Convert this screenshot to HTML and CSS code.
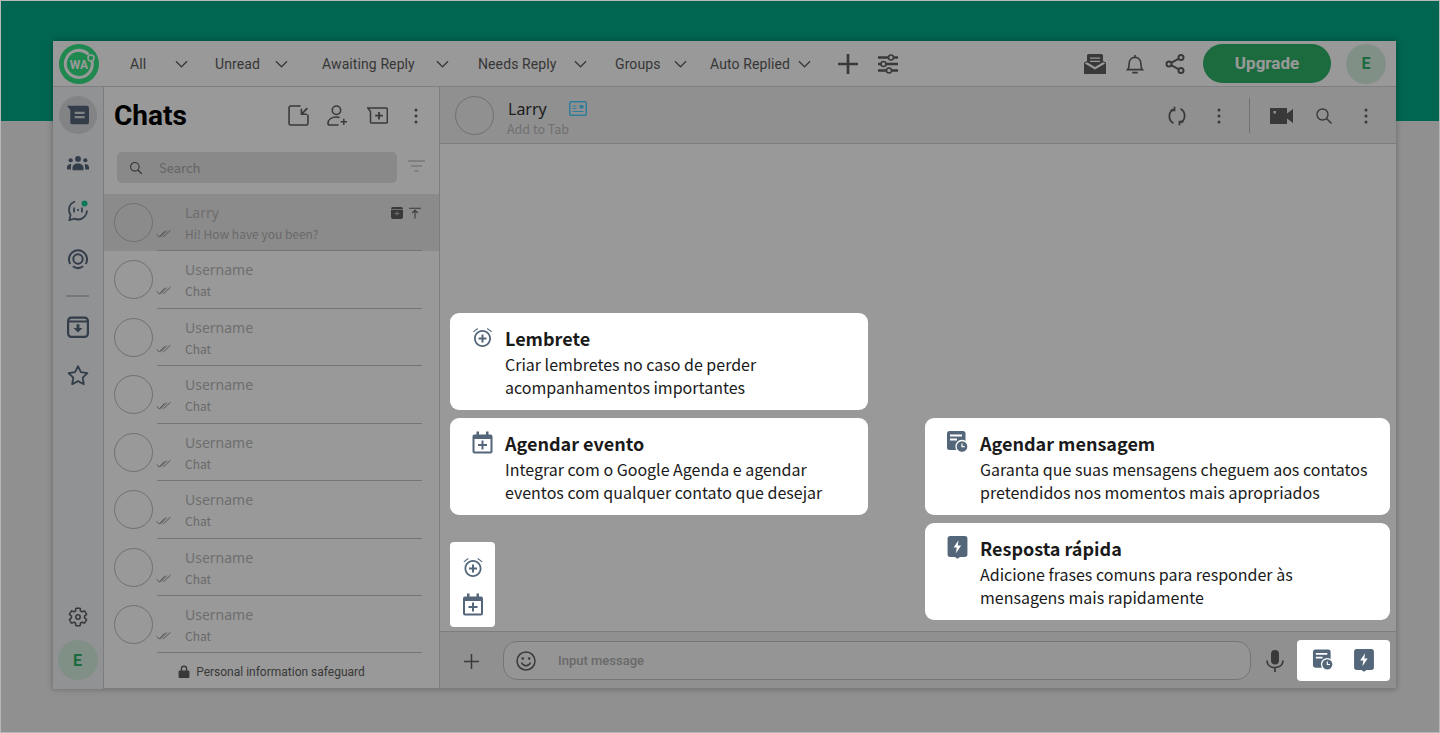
FILE: index.html
```html
<!DOCTYPE html>
<html lang="en">
<head>
    <meta charset="utf-8" />
    <meta name="viewport" content="width=device-width, initial-scale=1.0">
    <link rel="stylesheet" href="styles.css">
    <title>WA Chats</title>
</head>
<body>

<!-- Shared icons -->
<svg class="sprite">
    <symbol id="i-chev" viewBox="0 0 14 8"><path d="M1 1l6 6 6-6" fill="none" stroke="currentColor" stroke-width="1.3"/></symbol>
    <symbol id="i-check" viewBox="0 0 15 10"><path d="M.7 5.5l2.6 2.4L8.600 2.200M4.500 7.900L11 1.500M7.300 7.900L14.500 1.200" fill="none" stroke="currentColor" stroke-width=".9"/></symbol>
    <symbol id="i-dots" viewBox="0 0 4 16"><circle cx="2" cy="2" r="1.500" fill="currentColor"/><circle cx="2" cy="8" r="1.500" fill="currentColor"/><circle cx="2" cy="14" r="1.500" fill="currentColor"/></symbol>
    <symbol id="i-search" viewBox="0 0 18 18"><circle cx="7.500" cy="7.500" r="5.500" fill="none" stroke="currentColor" stroke-width="1.400"/><path d="M11.500 11.500l5 5" stroke="currentColor" stroke-width="1.600"/></symbol>
    <symbol id="i-alarm" viewBox="1 .5 22 23"><path fill="currentColor" d="M7.600 3.400L7 2.500 2.500 5.900l.6.900zM21.500 5.900L17 2.500l-.6.900 4.500 3.400zM12 4.500c-4.700 0-8.500 3.800-8.500 8.500s3.800 8.500 8.500 8.500 8.500-3.800 8.500-8.500-3.800-8.500-8.500-8.500zm0 15.200c-3.700 0-6.700-3-6.700-6.700s3-6.700 6.700-6.700 6.700 3 6.700 6.700-3 6.700-6.700 6.700zm1-10.700h-2v3H8v2h3v3h2v-3h3v-2h-3z"/></symbol>
    <symbol id="i-calendar" viewBox="-1 -.5 22 23"><path fill="currentColor" d="M4 0h2.500v3h7V0H16v3h2a2 2 0 012 2v15a2 2 0 01-2 2H2a2 2 0 01-2-2V5a2 2 0 012-2h2zM2 7.500V20h16V7.500zM9 9h2v3.500h3.500v2H11V18H9v-3.500H5.500v-2H9z"/></symbol>
    <symbol id="i-schedule" viewBox="-1 0 23 23"><rect width="18.500" height="19" rx="2.500" fill="currentColor"/><path d="M3 4.500h12M3 8.500h7" stroke="#fff" stroke-width="1.800"/><circle cx="15" cy="15.500" r="6" fill="currentColor" stroke="#fff" stroke-width="1.300"/><path d="M15 12.500v3.200h2.800" fill="none" stroke="#fff" stroke-width="1.200"/></symbol>
    <symbol id="i-quick" viewBox="0 0 19 22"><path fill="currentColor" d="M2.500 0h14A2.500 2.500 0 0119 2.500v15a2.500 2.500 0 01-2.500 2.500H12l-2.500 1.800L7 20H2.500A2.500 2.500 0 010 17.500v-15A2.500 2.500 0 012.500 0z"/><path fill="#fff" d="M10.500 4L5.800 11h3l-.8 5.500L13 9.200h-3.200z"/></symbol>
</svg>

<div class="app">
    <header class="topbar">
        <svg class="logo" viewBox="0 0 40 40">
            <circle cx="20" cy="20" r="20" fill="#32e382"/>
            <path d="M29.500 10.500A13.500 13.500 0 1 0 33 17" fill="none" stroke="#fff" stroke-width="3"/>
            <circle cx="32" cy="14" r="3" fill="#32e382" stroke="#fff" stroke-width="1.500"/>
            <text x="20" y="24.500" text-anchor="middle" class="logo-text">WA</text>
        </svg>
        <nav class="tabs">
            <div class="tab">All <svg class="chev"><use href="#i-chev"/></svg></div>
            <div class="tab">Unread <svg class="chev"><use href="#i-chev"/></svg></div>
            <div class="tab">Awaiting Reply <svg class="chev"><use href="#i-chev"/></svg></div>
            <div class="tab">Needs Reply <svg class="chev"><use href="#i-chev"/></svg></div>
            <div class="tab">Groups <svg class="chev"><use href="#i-chev"/></svg></div>
            <div class="tab">Auto Replied <svg class="chev"><use href="#i-chev"/></svg></div>
        </nav>
        <svg class="bar-plus" viewBox="0 0 20 20"><path d="M10 0v20M0 10h20" stroke="currentColor" stroke-width="2.600"/></svg>
        <svg class="bar-sliders" viewBox="0 0 20 20" fill="none" stroke="currentColor" stroke-width="2.400">
            <path d="M0 3.500h20M0 10h20M0 16.500h20"/>
            <circle cx="13" cy="3.500" r="2.500" fill="#fff" stroke-width="1.500"/>
            <circle cx="5.500" cy="10" r="2.500" fill="#fff" stroke-width="1.500"/>
            <circle cx="11" cy="16.500" r="2.500" fill="#fff" stroke-width="1.500"/>
        </svg>
        <div class="bar-right">
            <svg class="bar-icon" viewBox="0 0 22 20"><path fill="currentColor" d="M3 7V1.500A1.500 1.500 0 014.500 0h13A1.500 1.500 0 0119 1.500V7l3 1.800V20H0V8.800zM6 3.500v1.300h10V3.500zm0 3.200V8h10V6.700zM.8 9.500L11 15.500l10.200-6-2.200-1.300-8 4.700-8-4.700z"/></svg>
            <svg class="bar-icon" viewBox="0 0 20 22" fill="none" stroke="currentColor" stroke-width="1.800"><path d="M2 17.200c1.400-1.500 1.500-3 1.500-6.200C3.500 7 6 3.700 10 3.700S16.500 7 16.500 11c0 3.200.1 4.700 1.500 6.200zM10 1v2.500"/><path d="M7 20.500h6" stroke-width="2"/></svg>
            <svg class="bar-icon" viewBox="0 0 20 20" fill="none" stroke="currentColor" stroke-width="2"><circle cx="16" cy="3.500" r="2.500"/><circle cx="4" cy="10" r="2.500"/><circle cx="16" cy="16.500" r="2.500"/><path d="M6.200 8.800l7.600-4.200M6.200 11.200l7.600 4.200"/></svg>
            <button class="upgrade">Upgrade</button>
            <div class="user-badge">E</div>
        </div>
    </header>

    <div class="app-body">
        <aside class="rail">
            <div class="rail-item rail-active">
                <svg viewBox="0 0 20 17"><path fill="currentColor" d="M0 0h18a2 2 0 012 2v13a2 2 0 01-2 2H5a2 2 0 01-2-2V4z"/><path d="M7 6.500h9M7 10.500h9" stroke="#d8dade" stroke-width="2"/></svg>
            </div>
            <div class="rail-item">
                <svg viewBox="0 0 24 16"><g fill="currentColor"><circle cx="12" cy="3.500" r="3.200"/><circle cx="4" cy="5" r="2.300"/><circle cx="20" cy="5" r="2.300"/><path d="M6 16v-3c0-2.500 2.500-4.500 6-4.500s6 2 6 4.500v3zM0 15v-2.500C0 10.500 1.500 9 4.500 9L4.200 15zM24 15v-2.500c0-2-1.500-3.500-4.500-3.500l.3 6z"/></g></svg>
            </div>
            <div class="rail-item">
                <svg viewBox="0 0 22 22"><path d="M8 1.500A9 9 0 0 0 2 10c0 2 .6 3.400 1.500 4.800L2.500 20l5-1.300c1.200.5 2.300.8 3.500.8a9 9 0 0 0 9-9" fill="none" stroke="currentColor" stroke-width="1.800"/><path d="M7.500 7.500a5 5 0 0 0 0 5M14.500 7.500a5 5 0 0 1 0 5" fill="none" stroke="currentColor" stroke-width="1.600"/><circle cx="11" cy="10" r="1.100" fill="currentColor"/><circle cx="17.500" cy="3.500" r="3" fill="#17c79a"/></svg>
            </div>
            <div class="rail-item">
                <svg viewBox="0 0 22 22" fill="none" stroke="currentColor" stroke-width="2"><circle cx="11" cy="11" r="4.700"/><path d="M3.300 16a9 9 0 1 1 15.400 0"/><path d="M5.800 18.300a9 9 0 0 0 10.400 0"/></svg>
            </div>
            <div class="rail-divider"></div>
            <div class="rail-item">
                <svg viewBox="0 0 20 20"><path fill="none" stroke="currentColor" stroke-width="2" d="M1 4.500A3 3 0 014 1.500h12a3 3 0 013 3V16a3 3 0 01-3 3H4a3 3 0 01-3-3zM1 5h18"/><path fill="currentColor" d="M8.700 7.500h2.600v3.300H14L10 15l-4-4.200h2.700z"/></svg>
            </div>
            <div class="rail-item">
                <svg viewBox="0 0 22 21"><path fill="none" stroke="currentColor" stroke-width="1.800" stroke-linejoin="round" d="M11 1.700l2.900 6 6.500.9-4.700 4.600 1.100 6.500-5.800-3.100-5.800 3.100 1.100-6.500L1.600 8.600l6.500-.9z"/></svg>
            </div>
            <div class="rail-item rail-bottom">
                <svg viewBox="0 0 24 24"><path fill="none" stroke="#606060" stroke-width="1.700" d="M19.140 12.940c.04-.3.060-.61.060-.94 0-.32-.020-.64-.070-.94l2.030-1.580c.18-.14.230-.41.120-.61l-1.920-3.320c-.12-.22-.37-.29-.59-.22l-2.390.96c-.5-.38-1.030-.7-1.620-.94l-.36-2.540c-.04-.24-.24-.41-.48-.41h-3.840c-.24 0-.43.17-.47.41l-.36 2.540c-.59.24-1.130.57-1.620.94l-2.390-.96c-.22-.08-.47 0-.59.22L2.740 8.870c-.12.21-.08.47.12.61l2.030 1.580c-.05.3-.09.63-.09.94s.02.64.07.94l-2.030 1.580c-.18.14-.23.41-.12.61l1.920 3.320c.12.22.37.29.59.22l2.390-.96c.5.38 1.030.7 1.620.94l.36 2.540c.05.24.24.41.48.41h3.840c.24 0 .44-.17.47-.41l.36-2.540c.59-.24 1.130-.56 1.620-.94l2.390.96c.22.08.47 0 .59-.22l1.920-3.320c.12-.22.07-.47-.12-.61z"/><circle cx="12" cy="12" r="2.400" fill="none" stroke="#606060" stroke-width="1.700"/></svg>
            </div>
            <div class="user-badge rail-badge">E</div>
        </aside>

        <section class="chat-list">
            <div class="list-head">
                <h1>Chats</h1>
                <svg class="head-icon" viewBox="0 0 20 20" fill="none" stroke="currentColor" stroke-width="1.500"><path d="M12 1H2.500A1.500 1.500 0 001 2.500v15A1.500 1.500 0 002.500 19h15a1.500 1.500 0 001.500-1.500V9"/><path fill="currentColor" stroke="none" d="M12 3.500v6h6V8H14.700L19 3.500 17.800 2.300 13.500 6.800V3.500z"/></svg>
                <svg class="head-icon" viewBox="0 0 20 20" fill="none" stroke="currentColor" stroke-width="1.500"><circle cx="9" cy="5" r="4"/><path d="M1 19v-1.500C1 14 4 11.500 9 11.500c1 0 2 .1 3 .4M1 19h10"/><path d="M16 13v6M13 16h6" stroke-width="1.400"/></svg>
                <svg class="head-icon" viewBox="0 0 21 17" fill="none" stroke="currentColor" stroke-width="1.500"><path d="M.8 1h18.700a.8.8 0 01.8.8V15a1 1 0 01-1 1H4.500a1 1 0 01-1-1V4.500z"/><path d="M12 5v7.500M8.200 8.700h7.600" stroke-width="1.800"/></svg>
                <svg class="head-dots"><use href="#i-dots"/></svg>
            </div>
            <div class="search-row">
                <div class="search-box">
                    <svg class="search-icon"><use href="#i-search"/></svg>
                    <span>Search</span>
                </div>
                <svg class="filter-icon" viewBox="0 0 17 12"><path d="M0 1h17M3 6h11M6.500 11h4" stroke="currentColor" stroke-width="1.300"/></svg>
            </div>

            <div class="row row-active">
                <div class="avatar"></div>
                <div class="row-main">
                    <svg class="check"><use href="#i-check"/></svg>
                    <div class="row-text">
                        <div class="row-name">Larry
                            <span class="row-flags">
                                <svg viewBox="0 0 12 12"><path fill="#606060" d="M2 0h8a2 2 0 012 2v8a2 2 0 01-2 2H2a2 2 0 01-2-2V2a2 2 0 012-2z"/><path d="M0 2.500h12M3.500 6.500h5M6 4.500v4" stroke="#bbb" stroke-width="1"/></svg>
                                <svg viewBox="0 0 13 12"><path d="M0 .8h13M6.500 12V3.500M3.500 6l3-3 3 3" fill="none" stroke="#606060" stroke-width="1.200"/></svg>
                            </span>
                        </div>
                        <div class="row-msg">Hi! How have you been?</div>
                    </div>
                </div>
            </div>
            <div class="row">
                <div class="avatar"></div>
                <div class="row-main"><svg class="check"><use href="#i-check"/></svg>
                    <div class="row-text"><div class="row-name">Username</div><div class="row-msg">Chat</div></div></div>
            </div>
            <div class="row">
                <div class="avatar"></div>
                <div class="row-main"><svg class="check"><use href="#i-check"/></svg>
                    <div class="row-text"><div class="row-name">Username</div><div class="row-msg">Chat</div></div></div>
            </div>
            <div class="row">
                <div class="avatar"></div>
                <div class="row-main"><svg class="check"><use href="#i-check"/></svg>
                    <div class="row-text"><div class="row-name">Username</div><div class="row-msg">Chat</div></div></div>
            </div>
            <div class="row">
                <div class="avatar"></div>
                <div class="row-main"><svg class="check"><use href="#i-check"/></svg>
                    <div class="row-text"><div class="row-name">Username</div><div class="row-msg">Chat</div></div></div>
            </div>
            <div class="row">
                <div class="avatar"></div>
                <div class="row-main"><svg class="check"><use href="#i-check"/></svg>
                    <div class="row-text"><div class="row-name">Username</div><div class="row-msg">Chat</div></div></div>
            </div>
            <div class="row">
                <div class="avatar"></div>
                <div class="row-main"><svg class="check"><use href="#i-check"/></svg>
                    <div class="row-text"><div class="row-name">Username</div><div class="row-msg">Chat</div></div></div>
            </div>
            <div class="row">
                <div class="avatar"></div>
                <div class="row-main"><svg class="check"><use href="#i-check"/></svg>
                    <div class="row-text"><div class="row-name">Username</div><div class="row-msg">Chat</div></div></div>
            </div>
            <div class="safeguard">
                <svg viewBox="0 0 11 12"><path fill="#606060" d="M2.500 5V3.500a3 3 0 016 0V5h1a1 1 0 011 1v5a1 1 0 01-1 1h-8a1 1 0 01-1-1V6a1 1 0 011-1zm1.300 0h3.400V3.500a1.700 1.700 0 00-3.400 0z"/></svg>
                Personal information safeguard
            </div>
        </section>

        <section class="conversation">
            <div class="conv-head">
                <div class="avatar conv-avatar"></div>
                <div class="conv-title">
                    <div class="conv-name">Larry
                        <svg viewBox="0 0 18 15" fill="none" stroke="#4bd0ff"><rect x=".75" y=".75" width="16.500" height="13.500" rx="1" stroke-width="1.500"/><path d="M3.500 5h4M3.500 7.500h4M3.500 10.500h11" stroke-width="1.200"/><rect x="10.500" y="4" width="4" height="3.500" fill="#4bd0ff" stroke="none"/></svg>
                    </div>
                    <div class="conv-tab">Add to Tab</div>
                </div>
                <div class="conv-tools">
                    <svg class="tool-sync" viewBox="0 0 20 20" fill="none" stroke="currentColor" stroke-width="1.800"><path d="M6.500 3.300A8 8 0 0 0 6.500 17.300M13.500 16.700A8 8 0 0 0 13.500 2.700"/><path d="M7.500 .8v3.500H3.500M12.500 19.200v-3.500h4"/></svg>
                    <svg class="tool-dots"><use href="#i-dots"/></svg>
                    <span class="tool-line"></span>
                    <svg class="tool-video" viewBox="0 0 23 16"><path fill="currentColor" d="M0 0h17v5.500L23 1v14l-6-4.500V16H0zM3.500 3v2.500H6V3z" fill-rule="evenodd"/></svg>
                    <svg class="tool-search"><use href="#i-search"/></svg>
                    <svg class="tool-dots"><use href="#i-dots"/></svg>
                </div>
            </div>
            <div class="conv-body"></div>
            <div class="composer">
                <svg class="composer-plus" viewBox="0 0 15 15"><path d="M7.500 0v15M0 7.500h15" stroke="currentColor" stroke-width="1.500"/></svg>
                <div class="composer-input">
                    <svg viewBox="0 0 20 20" fill="none" stroke="currentColor" stroke-width="1.500"><circle cx="10" cy="10" r="9"/><path d="M5.500 11.500c1 2.200 2.500 3.300 4.500 3.300s3.500-1.100 4.500-3.300"/><circle cx="6.800" cy="7.500" r="1.300" fill="currentColor" stroke="none"/><circle cx="13.200" cy="7.500" r="1.300" fill="currentColor" stroke="none"/></svg>
                    <span>Input message</span>
                </div>
                <svg class="composer-mic" viewBox="0 0 18 22"><rect x="5" width="8" height="14.500" rx="4" fill="currentColor"/><path d="M1 10.500c0 4.500 3.500 7 8 7s8-2.500 8-7M9 17.500V22" fill="none" stroke="currentColor" stroke-width="1.700"/></svg>
            </div>
        </section>
    </div>
</div>

<!-- Dimmed tour layer with the highlighted features on top -->
<div class="tour">
    <div class="tips tips-left">
        <div class="tip">
            <svg class="tip-icon"><use href="#i-alarm"/></svg>
            <div>
                <h2>Lembrete</h2>
                <p>Criar lembretes no caso de perder<br>acompanhamentos importantes</p>
            </div>
        </div>
        <div class="tip">
            <svg class="tip-icon"><use href="#i-calendar"/></svg>
            <div>
                <h2>Agendar evento</h2>
                <p>Integrar com o Google Agenda e agendar<br>eventos com qualquer contato que desejar</p>
            </div>
        </div>
    </div>
    <div class="tips tips-right">
        <div class="tip">
            <svg class="tip-icon"><use href="#i-schedule"/></svg>
            <div>
                <h2>Agendar mensagem</h2>
                <p>Garanta que suas mensagens cheguem aos contatos<br>pretendidos nos momentos mais apropriados</p>
            </div>
        </div>
        <div class="tip">
            <svg class="tip-icon"><use href="#i-quick"/></svg>
            <div>
                <h2>Resposta rápida</h2>
                <p>Adicione frases comuns para responder às<br>mensagens mais rapidamente</p>
            </div>
        </div>
    </div>
    <div class="spot spot-left">
        <svg><use href="#i-alarm"/></svg>
        <svg><use href="#i-calendar"/></svg>
    </div>
    <div class="spot spot-right">
        <svg><use href="#i-schedule"/></svg>
        <svg><use href="#i-quick"/></svg>
    </div>
</div>

</body>
</html>
```

FILE: styles.css
```css
* {
    box-sizing: border-box;
}

html, body {
    margin: 0;
    height: 733px;
    overflow: hidden;
}

body {
    position: relative;
    padding: 41px 44px 0 53px;
    background: linear-gradient(#00aa87 121px, #f0f0f0 121px);
    font-family: Roboto, sans-serif;
    color: #606060;
}

.sprite {
    display: none;
}

h1, h2, p {
    margin: 0;
}

/* App frame */
.app {
    display: flex;
    flex-direction: column;
    width: 1343px;
    height: 648px;
    background: #fff;
    box-shadow: 0 0 6px rgba(0, 0, 0, 0.3);
}

.topbar {
    display: flex;
    align-items: center;
    flex: none;
    height: 46px;
    padding-left: 6px;
    border-bottom: 1px solid #d6d6d6;
}

.logo {
    flex: none;
    width: 40px;
    height: 40px;
    margin-right: 31px;
}

.logo-text {
    font: 700 12px Roboto, sans-serif;
    fill: #fff;
}

.tabs {
    display: flex;
    flex: none;
    font-size: 14px;
    letter-spacing: 0.1px;
}

.tab {
    display: flex;
    align-items: center;
    justify-content: space-between;
    color: #5c5c5c;
}

.tab:nth-child(1) { width: 58px; margin-right: 27px; }
.tab:nth-child(2) { width: 73px; margin-right: 34px; }
.tab:nth-child(3) { width: 127px; margin-right: 29px; }
.tab:nth-child(4) { width: 109px; margin-right: 28px; }
.tab:nth-child(5) { width: 72px; margin-right: 23px; }
.tab:nth-child(6) { width: 101px; }

.chev {
    width: 13px;
    height: 8px;
}

.bar-plus {
    width: 20px;
    height: 20px;
    margin-left: 27px;
}

.bar-sliders {
    width: 20px;
    height: 20px;
    margin-left: 20px;
}

.bar-right {
    display: flex;
    align-items: center;
    margin-left: auto;
    padding-right: 10px;
}

.bar-icon {
    width: 22px;
    height: 20px;
    margin-right: 18px;
}

.upgrade {
    width: 128px;
    height: 39px;
    margin: 0 15px 0 -1px;
    padding: 0 0 2px;
    border: 0;
    border-radius: 20px;
    background: #2fb269;
    color: #fff;
    font: 700 17px Roboto, sans-serif;
}

.user-badge {
    display: flex;
    align-items: center;
    justify-content: center;
    flex: none;
    width: 40px;
    height: 40px;
    border-radius: 50%;
    background: #d8f0e2;
    color: #2fb269;
    font-weight: 700;
    font-size: 16px;
}

.app-body {
    display: flex;
    flex: 1;
    min-height: 0;
}

/* Left icon rail */
.rail {
    display: flex;
    flex-direction: column;
    align-items: center;
    flex: none;
    width: 51px;
    padding: 9px 1px 8px 0;
    background: #f2f3f6;
    border-right: 1px solid #d0d0d0;
    color: #54677a;
}

.rail-item {
    display: flex;
    align-items: center;
    justify-content: center;
    flex: none;
    width: 38px;
    height: 38px;
    margin-bottom: 10px;
    border-radius: 50%;
}

.rail-item svg {
    width: 22px;
    height: 22px;
}

.rail-active {
    background: #d8dade;
}

.rail-divider {
    flex: none;
    width: 23px;
    height: 2px;
    margin: 7px 0 11px;
    background: #c8c8c8;
}

.rail-bottom {
    margin-top: auto;
    margin-bottom: 4px;
}

.rail-badge {
    margin-bottom: 1px;
}

/* Chat list */
.chat-list {
    display: flex;
    flex-direction: column;
    flex: none;
    width: 336px;
    border-right: 1px solid #d0d0d0;
    border-bottom: 1px solid #d0d0d0;
}

.list-head {
    display: flex;
    align-items: center;
    height: 57px;
    padding: 0 21px 0 10px;
}

.list-head h1 {
    flex: 1;
    font-size: 28px;
    font-weight: 700;
    color: #000;
}

.head-icon {
    width: 21px;
    height: 21px;
    margin-right: 18.500px;
}

.head-dots {
    width: 4px;
    height: 16px;
    margin-left: 8px;
}

.search-row {
    display: flex;
    align-items: center;
    height: 31px;
    margin: 8px 0 11px;
    padding-left: 13px;
}

.search-box {
    display: flex;
    align-items: center;
    width: 280px;
    height: 31px;
    padding-left: 12px;
    border-radius: 5px;
    background: #e4e4e4;
    font-family: "Noto Sans CJK SC", sans-serif;
    font-size: 13px;
    color: #a8a8a8;
}

.search-icon {
    width: 14px;
    height: 14px;
    margin-right: 16px;
    color: #555;
}

.filter-icon {
    width: 17px;
    height: 12px;
    margin: -4px 0 0 11px;
    color: #c8c8c8;
}

.row {
    display: flex;
    flex: none;
    height: 57.43px;
    padding: 9px 17px 0 10px;
}

.row-active {
    background: #e8e8e8;
}

.avatar {
    flex: none;
    width: 39px;
    height: 39px;
    border: 1px solid #bbb;
    border-radius: 50%;
}

.row-main {
    display: flex;
    flex: 1;
    margin-left: 4px;
    margin-top: -9px;
    padding-top: 9px;
    border-bottom: 1px solid #c4c4c4;
}

.check {
    flex: none;
    width: 15px;
    height: 10px;
    margin: 26px 14px 0 -1px;
    color: #858585;
}

.row-text {
    flex: 1;
}

.row-name {
    display: flex;
    justify-content: space-between;
    height: 20px;
    font-family: "Noto Sans", sans-serif;
    font-size: 14px;
    line-height: 20px;
    color: #b8b8b8;
}

.row-flags {
    display: flex;
    align-items: center;
    gap: 6px;
    margin-right: 1px;
}

.row-flags svg {
    width: 12px;
    height: 12px;
}

.row-msg {
    margin-top: 2px;
    font-family: "Noto Sans CJK SC", sans-serif;
    font-size: 12px;
    line-height: 18px;
    color: #b0b0b0;
}

.safeguard {
    display: flex;
    align-items: center;
    justify-content: center;
    flex: 1;
    padding-top: 2px;
    font-size: 12px;
    color: #606060;
}

.safeguard svg {
    width: 12px;
    height: 13px;
    margin-right: 6px;
}

/* Open conversation */
.conversation {
    display: flex;
    flex-direction: column;
    flex: 1;
    min-width: 0;
}

.conv-head {
    display: flex;
    align-items: center;
    flex: none;
    height: 57px;
    padding-left: 15px;
    background: #f0f0f0;
    border-bottom: 1px solid #d0d0d0;
}

.conv-avatar {
    margin-right: 14px;
}

.conv-title {
    padding-top: 6px;
}

.conv-name {
    display: flex;
    align-items: center;
    height: 22px;
    font-family: "Noto Sans", sans-serif;
    font-size: 16px;
    color: #333;
}

.conv-name svg {
    width: 18px;
    height: 15px;
    margin: -2px 0 0 22px;
}

.conv-tab {
    margin: 0 0 0 -1px;
    font-family: "Noto Sans CJK SC", sans-serif;
    font-size: 12.500px;
    line-height: 18px;
    color: #bbb;
}

.conv-tools {
    display: flex;
    align-items: center;
    margin-left: auto;
    padding: 1px 28px 0 0;
    color: #606060;
}

.tool-sync {
    width: 20px;
    height: 20px;
    margin-right: 30px;
}

.tool-dots {
    width: 4px;
    height: 16px;
}

.tool-line {
    width: 1px;
    height: 35px;
    margin: 0 20px 0 28px;
    background: #bbb;
}

.tool-video {
    width: 23px;
    height: 16px;
    margin-right: 22px;
}

.tool-search {
    width: 18px;
    height: 18px;
    margin-right: 31px;
}

.conv-body {
    flex: 1;
}

.composer {
    display: flex;
    align-items: center;
    flex: none;
    height: 58px;
    padding-left: 24px;
    background: #f0f0f0;
    border-top: 1px solid #d0d0d0;
    border-bottom: 1px solid #d0d0d0;
    color: #606060;
}

.composer-plus {
    width: 15px;
    height: 15px;
    margin: 2px 24px 0 0;
}

.composer-input {
    display: flex;
    align-items: center;
    width: 748px;
    height: 39px;
    padding: 1px 0 0 12px;
    border: 1px solid #c4c4c4;
    border-radius: 14px;
    background: #f8f8f8;
}

.composer-input svg {
    width: 20px;
    height: 20px;
    margin-right: 22px;
}

.composer-input span {
    font-size: 13px;
    font-weight: 500;
    color: #b0b0b0;
}

.composer-mic {
    width: 18px;
    height: 22px;
    margin: 2px 0 0 15px;
}

/* Tour layer */
.tour {
    position: absolute;
    inset: 0;
    border: 1px solid #b8b8b8;
    background: rgba(0, 0, 0, 0.4);
    font-family: "Noto Sans CJK SC", sans-serif;
}

.tips {
    position: absolute;
    display: flex;
    flex-direction: column;
    gap: 8px;
}

.tips-left {
    top: 312px;
    left: 449px;
    width: 418px;
}

.tips-right {
    top: 417px;
    left: 924px;
    width: 465px;
}

.tip {
    display: flex;
    height: 97px;
    padding: 13px 0 0 21px;
    border-radius: 9px;
    background: #fff;
    color: #1a1a1a;
}

.tip-icon {
    flex: none;
    width: 23px;
    height: 23px;
    margin-right: 11px;
    color: #54677a;
}

.tip h2 {
    font-size: 18px;
    font-weight: 700;
    line-height: 24px;
}

.tip p {
    margin-top: 3px;
    font-size: 16px;
    line-height: 23px;
}

.spot {
    position: absolute;
    display: flex;
    align-items: center;
    background: #fff;
    border-radius: 4px;
    color: #54677a;
}

.spot svg {
    flex: none;
    width: 22px;
    height: 23px;
}

.spot-left {
    top: 541px;
    left: 449px;
    flex-direction: column;
    gap: 14px;
    width: 45px;
    height: 85px;
    padding-top: 14px;
}

.spot-right {
    top: 639px;
    left: 1296px;
    gap: 19px;
    width: 93px;
    height: 41px;
    padding-left: 15px;
}
```
